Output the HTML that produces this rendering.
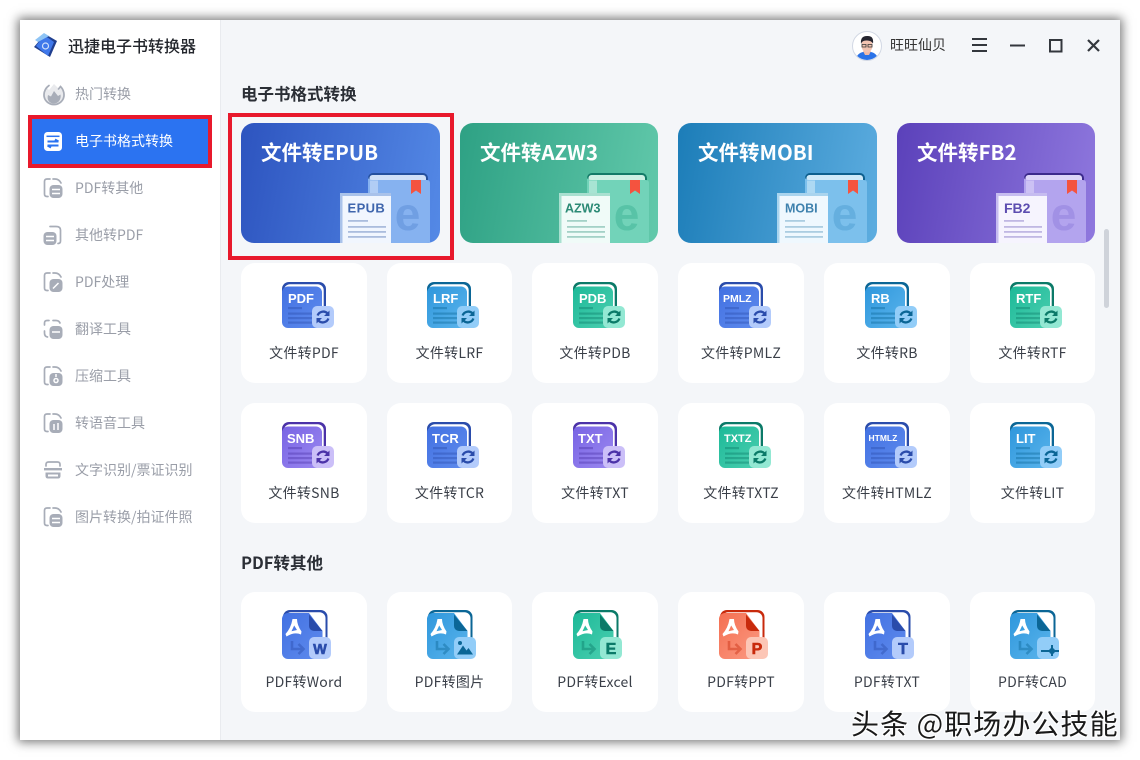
<!DOCTYPE html>
<html lang="zh"><head><meta charset="utf-8"><title>迅捷电子书转换器</title>
<style>
*{box-sizing:border-box}
html,body{margin:0;padding:0;width:1140px;height:760px;overflow:hidden;background:#fff;font-family:"Noto Sans CJK SC","Liberation Sans",sans-serif;}
.abs,.card,.ban,.nav,.sic,.h{position:absolute}
#win{position:absolute;left:20px;top:20px;width:1100px;height:720px;background:#f4f6f9;box-shadow:0 0 10px 2px rgba(0,0,0,.55)}
#side{position:absolute;left:20px;top:20px;width:200.5px;height:720px;background:#fff;border-right:1px solid #e9ebef}
.nav{left:75px;width:140px;height:20px;line-height:20px;font-size:14px;color:#9a9ea8;white-space:nowrap}
.sic{left:43px;width:20px;height:20px;overflow:visible}
.sic .o{fill:none;stroke:#a8adb8;stroke-width:1.7;stroke-linecap:round}
.sic .f{fill:#a8adb8}
.sic .w{fill:none;stroke:#fff;stroke-width:1.5}
.card{background:#fff;border-radius:14px;height:120px}
.card svg{position:absolute;overflow:visible}
.card span{position:absolute;left:0;right:0;top:80px;height:20px;line-height:20px;text-align:center;font-size:14px;letter-spacing:.25px;color:#3a3f48;white-space:nowrap}
.ban{top:123px;height:120px;border-radius:13px;overflow:hidden}
.ban b{position:absolute;left:20px;top:14px;font-size:20.5px;line-height:28px;color:#fff;font-weight:700;white-space:nowrap}
.ban svg{position:absolute;left:0;top:0}
.h{left:241px;font-size:16.5px;font-weight:700;color:#2b2f36;line-height:22px;white-space:nowrap}
svg text{font-family:"Liberation Sans",sans-serif;font-weight:700}
.red{position:absolute;border:4.5px solid #e8192c}
.cb{--f:url(#gb);--d:#2a4cab;--b:#b3cbfb;--t:#2a4cab}
.cl{--f:url(#gl);--d:#0b6696;--b:#92cdf8;--t:#0b6696}
.cg{--f:url(#gg);--d:#0b7a68;--b:#93e8d3;--t:#0b7a68}
.cp{--f:url(#gp);--d:#4b32a8;--b:#cbbff8;--t:#4b32a8}
.cr{--f:url(#gr);--d:#c82a0c;--b:#fcc6b6;--t:#c82a0c}
.bg{stroke-width:.6px;stroke:var(--t);fill:var(--t)}
</style></head><body>
<svg width="0" height="0" style="position:absolute">
<defs>
<linearGradient id="gb" x1="0" y1="0" x2="1" y2="1"><stop offset="0" stop-color="#4271e2"/><stop offset="1" stop-color="#5f8bed"/></linearGradient>
<linearGradient id="gl" x1="0" y1="0" x2="1" y2="1"><stop offset="0" stop-color="#2f97dc"/><stop offset="1" stop-color="#5ab4ec"/></linearGradient>
<linearGradient id="gg" x1="0" y1="0" x2="1" y2="1"><stop offset="0" stop-color="#1cb998"/><stop offset="1" stop-color="#4ccfb0"/></linearGradient>
<linearGradient id="gp" x1="0" y1="0" x2="1" y2="1"><stop offset="0" stop-color="#7864e4"/><stop offset="1" stop-color="#9b88f0"/></linearGradient>
<linearGradient id="gr" x1="0" y1="0" x2="1" y2="1"><stop offset="0" stop-color="#f46f52"/><stop offset="1" stop-color="#fb9a82"/></linearGradient>
<symbol id="doc" viewBox="0 0 52 46" overflow="visible">
<rect x="0" y="0" width="44" height="44" rx="7" style="fill:var(--d)"/>
<rect x="2" y="2.3" width="39.7" height="42" rx="6" fill="#fff"/>
<rect x="0" y="4.5" width="40" height="41.5" rx="6" style="fill:var(--f)"/>
<g style="fill:var(--d)" opacity=".4"><rect x="6" y="25" width="14" height="2.2"/><rect x="6" y="30.5" width="26" height="2.2"/><rect x="6" y="35" width="26" height="2.2"/><rect x="6" y="39.5" width="26" height="2.2"/></g>
<rect x="30" y="24" width="22" height="22" rx="5" style="fill:var(--b)"/>
<g fill="none" stroke-width="2.3" style="stroke:var(--t)"><path d="M35.6 33.5A6 6 0 0 1 45.6 31.5"/><path d="M46.4 36.5A6 6 0 0 1 36.4 38.5"/></g>
<path d="M47.5 28.5V34H42Z M34.5 41.5V36H40Z" style="fill:var(--t)"/>
</symbol>
<symbol id="pdf" viewBox="0 0 50 50" overflow="visible">
<rect x="1" y="0" width="44.5" height="47" rx="7" style="fill:var(--d)"/>
<rect x="3" y="2.3" width="40.5" height="47" rx="6" fill="#fff"/>
<path d="M6 3H27L40.5 21V43a6 6 0 0 1-6 6H6a6 6 0 0 1-6-6V9a6 6 0 0 1 6-6Z" style="fill:var(--f)"/>
<path d="M27 4.500L40.500 21H32a5 5 0 0 1-5-5Z" style="fill:var(--d)"/>
<path fill="#fff" fill-rule="evenodd" d="M10.500 9h4.500Q15 15 19.500 21.500L19 24.500Q12.500 21.500 4.500 26.500L3.500 24Q9 18 10.500 9ZM12.200 15.500 9.500 21.300 15 20Z"/>
<g fill="none" stroke-width="2.600" opacity=".42" style="stroke:var(--d)"><path d="M10 31V39H20"/><path d="M16.500 34 21.500 39 16.500 44"/></g>
<rect x="27" y="27" width="22" height="22" rx="5" style="fill:var(--b)"/>
</symbol>
<symbol id="book" viewBox="0 0 100 80" overflow="visible">
<rect x="28" y="0" width="60" height="40" rx="5" style="fill:var(--bd)"/>
<rect x="29.500" y="2" width="56.500" height="12" rx="3" style="fill:var(--bp)"/>
<path d="M28 4Q28 7 33 7H87Q90 7 90 10V80H28Z" style="fill:var(--bb)"/>
<rect x="30" y="7.500" width="8" height="30" opacity=".6" style="fill:var(--bp)"/>
<path d="M71 7H81V21L76 17.500 71 21Z" fill="#f4533f"/>
<text x="67.500" y="57" text-anchor="middle" font-size="46" opacity=".5" style="fill:var(--be);font-family:'Liberation Sans',sans-serif;font-weight:700">e</text>
<rect x="0" y="20" width="51" height="60" style="fill:var(--pp)"/>
<rect x="2.500" y="23" width="48.500" height="57" style="fill:var(--pw)"/>
<g style="fill:var(--bl)" opacity=".38"><rect x="8" y="47" width="20" height="1.800"/><rect x="8" y="53" width="38" height="1.800"/><rect x="8" y="58" width="38" height="1.800"/><rect x="8" y="63" width="38" height="1.800"/></g>
</symbol>
</defs>
</svg>

<div id="win"></div>
<div id="side"></div>

<!-- logo -->
<svg class="abs" style="left:33px;top:33px" width="24" height="25" viewBox="0 0 24 25">
<path d="M12 1 24 8 17 24 1 14Z" fill="#203f8f"/><path d="M11 2 21 9 15 23 3 13Z" fill="#3f78ea"/><path d="M11 0 16 3 5 9 2 7Z" fill="#8ec4f5"/><circle cx="12.500" cy="13" r="3" fill="none" stroke="#cfe0fb" stroke-width="1.200"/>
</svg>
<div class="abs" style="left:68px;top:34px;font-size:16px;line-height:22px;font-weight:500;color:#23262c;white-space:nowrap">迅捷电子书转换器</div>

<!-- sidebar -->
<svg class="sic" style="top:83px;width:22px;height:22px" viewBox="0 0 22 22"><path class="f" d="M11 1 16 6 18.500 3.500C21 7 22 9.500 22 12A11 10.500 0 0 1 0 12C0 9 2 6 3.500 4.500L6 7Z" opacity=".25"/><path class="o" d="M6 2.500C2.500 5 1 8.500 1 12A10 9.500 0 0 0 21 12C21 8.500 20 6 17.500 3.500L15.500 6"/><path class="f" d="M11 8 15 13 17.500 11.500C18.500 16 15.500 20.500 11 20.500S3.500 17 5 12L8 13.500Z"/></svg>
<div class="nav" style="top:84px">热门转换</div>

<div class="red" style="left:28px;top:115px;width:184px;height:53px;background:#2b73f1"></div>
<svg class="sic" style="top:132px;left:44px;width:18px;height:19px" viewBox="0 0 18 19"><rect width="18" height="19" rx="3.500" fill="#fff"/><path d="M2.500 4.300H15.500" stroke="#2b73f1" stroke-width="1.500"/><path d="M3.500 9.500H14.500M11 7.500 14.500 9.500M14.500 13.500H3.500M7 15.500 3.500 13.500" fill="none" stroke="#2b73f1" stroke-width="1.900"/></svg>
<div class="nav" style="top:131px;color:#fff">电子书格式转换</div>

<svg class="sic" style="top:178px" viewBox="0 0 20 20"><path class="o" d="M7 1H4Q1.500 1 1.500 3.500V16Q1.500 18.500 4 18.500H5M10 1H12Q16 1 18 5"/><rect class="f" x="6.500" y="7" width="13" height="13" rx="4"/><path class="w" d="M9 11.500H17M9 15.500H17"/></svg>
<div class="nav" style="top:178px">PDF转其他</div>

<svg class="sic" style="top:225px" viewBox="0 0 20 20"><path class="o" d="M7 1.500H13Q17.500 1.500 17.500 5V16Q17.500 18.500 15 18.500"/><rect class="f" x="0.500" y="7" width="13" height="13" rx="4"/><path class="w" d="M3 11.500H11M3 15.500H11"/></svg>
<div class="nav" style="top:225px">其他转PDF</div>

<svg class="sic" style="top:272px" viewBox="0 0 20 20"><path class="o" d="M7 1H4Q1.500 1 1.500 3.500V16Q1.500 18.500 4 18.500H5M10 1H12Q16 1 18 5"/><rect class="f" x="6.500" y="7" width="13" height="13" rx="4"/><path class="w" d="M10 16.500 15.500 11"/></svg>
<div class="nav" style="top:272px">PDF处理</div>

<svg class="sic" style="top:319px" viewBox="0 0 20 20"><path class="o" d="M6 1.500H4Q1.500 1.500 1.500 4V6M1.500 12V14Q1.500 17.500 4.500 18M10 1.500H13Q16 1.500 17 4"/><rect class="f" x="6.500" y="7" width="13" height="13" rx="4"/><path class="w" d="M9 13H17"/></svg>
<div class="nav" style="top:319px">翻译工具</div>

<svg class="sic" style="top:366px" viewBox="0 0 20 20"><path class="o" d="M7 1H4Q1.500 1 1.500 3.500V16Q1.500 18.500 4 18.500H5M10 1H12Q16 1 18 5"/><rect class="f" x="6.500" y="7" width="13" height="13" rx="4"/><circle class="w" cx="13" cy="14.500" r="2"/><path class="w" d="M13 8V11"/></svg>
<div class="nav" style="top:366px">压缩工具</div>

<svg class="sic" style="top:413px" viewBox="0 0 20 20"><path class="o" d="M7 1H4Q1.500 1 1.500 3.500V16Q1.500 18.500 4 18.500H5M10 1H12Q16 1 18 5"/><rect class="f" x="6.500" y="7" width="13" height="13" rx="4"/><path class="w" d="M11 11V17M15 10V17"/></svg>
<div class="nav" style="top:413px">转语音工具</div>

<svg class="sic" style="top:460px" viewBox="0 0 20 20"><path class="o" d="M3 6V4.500Q3 2 5.500 2H14.500Q17 2 17 4.500V6" stroke-width="1.800"/><rect class="f" x="1" y="8" width="18" height="2.400"/><path class="f" d="M2.500 12.500H17.500V16Q17.500 18.500 15 18.500H5Q2.500 18.500 2.500 16ZM5 14.500V16.500H15V14.500Z"/></svg>
<div class="nav" style="top:460px">文字识别/票证识别</div>

<svg class="sic" style="top:507px" viewBox="0 0 20 20"><path class="o" d="M7 1H4Q1.500 1 1.500 3.500V16Q1.500 18.500 4 18.500H5M10 1H12Q16 1 18 5"/><rect class="f" x="6.500" y="7" width="13" height="13" rx="4"/><path class="w" d="M9 11.500H17M9 15.500H17"/></svg>
<div class="nav" style="top:507px">图片转换/拍证件照</div>

<!-- top bar -->
<svg class="abs" style="left:852px;top:31px" width="30" height="30" viewBox="0 0 30 30">
<defs><clipPath id="av"><circle cx="15" cy="15" r="14"/></clipPath></defs>
<circle cx="15" cy="15" r="14.500" fill="#fff" stroke="#d2d8e4"/>
<g clip-path="url(#av)"><path d="M3 30Q5 22 11 21H19Q25 22 27 30Z" fill="#2b73e8"/><path d="M11 20H19L17 24H13Z" fill="#f0b9a6"/><ellipse cx="15" cy="14.500" rx="5.500" ry="7" fill="#f3c4b2"/><path d="M9 13Q8 5 15 5 22 4.500 21 12.500 19 9 14 9.500 10 9.500 9 13Z" fill="#25252f"/><path d="M10 13.500H14V16H10ZM16 13.500H20V16H16Z" fill="none" stroke="#333" stroke-width=".8"/></g>
</svg>
<div class="abs" style="left:890px;top:35px;font-size:14px;line-height:20px;color:#333;white-space:nowrap">旺旺仙贝</div>
<svg class="abs" style="left:970px;top:36px" width="135" height="18" viewBox="0 0 135 18" fill="none" stroke="#33373d" stroke-width="2">
<path d="M2 3H17M2 9H17M2 15H17"/>
<path d="M40 9.500H55"/>
<rect x="80" y="4" width="11.500" height="11.500"/>
<path d="M118 4 129 15M129 4 118 15" stroke-width="2.200"/>
</svg>

<div class="h" style="top:82px">电子书格式转换</div>

<!-- banners -->
<div class="ban" style="left:241px;width:199px;background:linear-gradient(100deg,#2d54bf,#5489e6)"><b>文件转EPUB</b>
<svg width="199" height="120" style="--bd:#24509e;--bp:#cfe0f8;--bb:#86b2f0;--be:#5a8cd6;--pp:#a9c2ea;--pw:#f1f6fe;--bl:#3c62a8"><use href="#book" x="99" y="50" width="100" height="80"/><text x="106.500" y="89.500" font-size="13" letter-spacing=".4" fill="#3f66ad">EPUB</text></svg></div>
<div class="ban" style="left:460px;width:198px;background:linear-gradient(100deg,#2ea184,#62c9ab)"><b>文件转AZW3</b>
<svg width="198" height="120" style="--bd:#137a68;--bp:#cdf0e4;--bb:#72d3b9;--be:#3fb596;--pp:#a9e0d0;--pw:#f0fbf8;--bl:#2a8f78"><use href="#book" x="99" y="50" width="100" height="80"/><text x="105" y="89.500" font-size="12.500" fill="#2b8a75">AZW3</text></svg></div>
<div class="ban" style="left:678px;width:199px;background:linear-gradient(100deg,#1c7db8,#5dade0)"><b>文件转MOBI</b>
<svg width="199" height="120" style="--bd:#0d5f8e;--bp:#cfe9f8;--bb:#7cc0ec;--be:#4f9ed2;--pp:#a9d4ee;--pw:#eff8fe;--bl:#3f86b4"><use href="#book" x="99" y="50" width="100" height="80"/><text x="107" y="89.500" font-size="12.500" fill="#3f82ae">MOBI</text></svg></div>
<div class="ban" style="left:897px;width:198px;background:linear-gradient(100deg,#5b41ba,#8f78de)"><b>文件转FB2</b>
<svg width="198" height="120" style="--bd:#3c2a8c;--bp:#dcd5f8;--bb:#b3a4ee;--be:#8f7edc;--pp:#c6bcf0;--pw:#f6f4fe;--bl:#6a58b8"><use href="#book" x="99" y="50" width="100" height="80"/><text x="107" y="90" font-size="14" fill="#5c4db0">FB2</text></svg></div>

<div class="red" style="left:227.500px;top:113px;width:226px;height:147px"></div>
<div class="abs" style="left:1104px;top:229px;width:5px;height:79px;background:#cfd3da;border-radius:3px"></div>

<!-- row 1 -->
<div class="card cb" style="left:241px;top:263px;width:126px"><svg style="left:41px;top:19px" width="52" height="46"><use href="#doc" width="52" height="46"/><text x="6" y="21" font-size="13" fill="#fff">PDF</text></svg><span>文件转PDF</span></div>
<div class="card cl" style="left:387px;top:263px;width:125px"><svg style="left:40px;top:19px" width="52" height="46"><use href="#doc" width="52" height="46"/><text x="6" y="21" font-size="13" fill="#fff">LRF</text></svg><span>文件转LRF</span></div>
<div class="card cg" style="left:532px;top:263px;width:126px"><svg style="left:41px;top:19px" width="52" height="46"><use href="#doc" width="52" height="46"/><text x="6" y="21" font-size="13" fill="#fff">PDB</text></svg><span>文件转PDB</span></div>
<div class="card cb" style="left:678px;top:263px;width:126px"><svg style="left:41px;top:19px" width="52" height="46"><use href="#doc" width="52" height="46"/><text x="4" y="20" font-size="10.500" fill="#fff">PMLZ</text></svg><span>文件转PMLZ</span></div>
<div class="card cl" style="left:824px;top:263px;width:126px"><svg style="left:41px;top:19px" width="52" height="46"><use href="#doc" width="52" height="46"/><text x="6" y="21" font-size="13" fill="#fff">RB</text></svg><span>文件转RB</span></div>
<div class="card cg" style="left:970px;top:263px;width:125px"><svg style="left:40px;top:19px" width="52" height="46"><use href="#doc" width="52" height="46"/><text x="6" y="21" font-size="13" fill="#fff">RTF</text></svg><span>文件转RTF</span></div>

<!-- row 2 -->
<div class="card cp" style="left:241px;top:403px;width:126px"><svg style="left:41px;top:19px" width="52" height="46"><use href="#doc" width="52" height="46"/><text x="5" y="21" font-size="13" fill="#fff">SNB</text></svg><span>文件转SNB</span></div>
<div class="card cb" style="left:387px;top:403px;width:125px"><svg style="left:40px;top:19px" width="52" height="46"><use href="#doc" width="52" height="46"/><text x="5" y="21" font-size="13" fill="#fff">TCR</text></svg><span>文件转TCR</span></div>
<div class="card cp" style="left:532px;top:403px;width:126px"><svg style="left:41px;top:19px" width="52" height="46"><use href="#doc" width="52" height="46"/><text x="5" y="21" font-size="13" fill="#fff">TXT</text></svg><span>文件转TXT</span></div>
<div class="card cg" style="left:678px;top:403px;width:126px"><svg style="left:41px;top:19px" width="52" height="46"><use href="#doc" width="52" height="46"/><text x="5" y="20" font-size="11" fill="#fff">TXTZ</text></svg><span>文件转TXTZ</span></div>
<div class="card cb" style="left:824px;top:403px;width:126px"><svg style="left:41px;top:19px" width="52" height="46"><use href="#doc" width="52" height="46"/><text x="3.500" y="19" font-size="8.500" fill="#fff">HTMLZ</text></svg><span>文件转HTMLZ</span></div>
<div class="card cl" style="left:970px;top:403px;width:125px"><svg style="left:40px;top:19px" width="52" height="46"><use href="#doc" width="52" height="46"/><text x="6" y="21" font-size="13" fill="#fff">LIT</text></svg><span>文件转LIT</span></div>

<div class="h" style="top:551px">PDF转其他</div>

<!-- row 3 -->
<div class="card cb" style="left:241px;top:592px;width:126px"><svg style="left:41px;top:18px" width="50" height="50"><use href="#pdf" width="50" height="50"/><text class="bg" x="38" y="44" text-anchor="middle" font-size="14.500">W</text></svg><span>PDF转Word</span></div>
<div class="card cl" style="left:387px;top:592px;width:125px"><svg style="left:40px;top:18px" width="50" height="50"><use href="#pdf" width="50" height="50"/><circle cx="33" cy="33" r="2" style="fill:var(--t)"/><path d="M30 44.500 36 35.500 39.500 40.500 41.500 38 46 44.500Z" style="fill:var(--t)"/></svg><span>PDF转图片</span></div>
<div class="card cg" style="left:532px;top:592px;width:126px"><svg style="left:41px;top:18px" width="50" height="50"><use href="#pdf" width="50" height="50"/><text class="bg" x="38" y="44" text-anchor="middle" font-size="16">E</text></svg><span>PDF转Excel</span></div>
<div class="card cr" style="left:678px;top:592px;width:126px"><svg style="left:41px;top:18px" width="50" height="50"><use href="#pdf" width="50" height="50"/><text class="bg" x="38" y="44" text-anchor="middle" font-size="16">P</text></svg><span>PDF转PPT</span></div>
<div class="card cb" style="left:824px;top:592px;width:126px"><svg style="left:41px;top:18px" width="50" height="50"><use href="#pdf" width="50" height="50"/><text class="bg" x="38" y="44" text-anchor="middle" font-size="16">T</text></svg><span>PDF转TXT</span></div>
<div class="card cl" style="left:970px;top:592px;width:125px"><svg style="left:40px;top:18px" width="50" height="50"><use href="#pdf" width="50" height="50"/><path d="M31 41H49M42 35V46" stroke-width="2" style="stroke:var(--t)"/><circle cx="42" cy="41" r="3" style="fill:var(--t)"/></svg><span>PDF转CAD</span></div>

<!-- watermark -->
<div class="abs" style="left:851px;top:703px;height:40px;line-height:40px;font-size:28px;letter-spacing:1.1px;color:#1a1a1a;white-space:nowrap;text-shadow:1px 1px 0 #fff,-1px 1px 0 #fff,1px -1px 0 #fff,-1px -1px 0 #fff">头条 @职场办公技能</div>
</body></html>
